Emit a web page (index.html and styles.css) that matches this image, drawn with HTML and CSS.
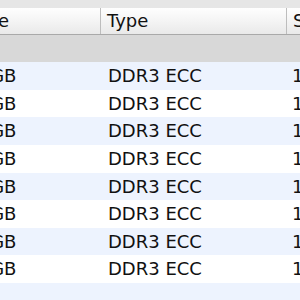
FILE: index.html
```html
<!DOCTYPE html>
<html>
<head>
<meta charset="utf-8">
<link rel="stylesheet" href="styles.css">
</head>
<body>
<div class="table">
  <div class="topstrip"></div>
  <div class="header">
    <div class="hcell c1">Size</div>
    <div class="hcell c2">Type</div>
    <div class="hcell c3">Speed</div>
  </div>
  <div class="band"></div>
  <div class="rows">
    <div class="row"><div class="cell c1">8 GB</div><div class="cell c2">DDR3 ECC</div><div class="cell c3">1333 MHz</div></div>
    <div class="row"><div class="cell c1">8 GB</div><div class="cell c2">DDR3 ECC</div><div class="cell c3">1333 MHz</div></div>
    <div class="row"><div class="cell c1">8 GB</div><div class="cell c2">DDR3 ECC</div><div class="cell c3">1333 MHz</div></div>
    <div class="row"><div class="cell c1">8 GB</div><div class="cell c2">DDR3 ECC</div><div class="cell c3">1333 MHz</div></div>
    <div class="row"><div class="cell c1">8 GB</div><div class="cell c2">DDR3 ECC</div><div class="cell c3">1333 MHz</div></div>
    <div class="row"><div class="cell c1">8 GB</div><div class="cell c2">DDR3 ECC</div><div class="cell c3">1333 MHz</div></div>
    <div class="row"><div class="cell c1">8 GB</div><div class="cell c2">DDR3 ECC</div><div class="cell c3">1333 MHz</div></div>
    <div class="row"><div class="cell c1">8 GB</div><div class="cell c2">DDR3 ECC</div><div class="cell c3">1333 MHz</div></div>
    <div class="row empty"></div>
  </div>
</div>
</body>
</html>
```
FILE: styles.css
```css
html, body {
  margin: 0;
  padding: 0;
  width: 300px;
  height: 300px;
  overflow: hidden;
  background: #ffffff;
}
.table {
  margin-left: -35px;
  width: 420px;
  font-family: "DejaVu Sans", Verdana, sans-serif;
  font-size: 18px;
  color: #111111;
}
.topstrip {
  height: 8px;
  background: #e6e6e6;
}
.header {
  display: flex;
  height: 26px;
  background: linear-gradient(#fefefe, #f4f4f4 50%, #e9e9e9);
  border-bottom: 1px solid #a9a9a9;
}
.hcell {
  box-sizing: border-box;
  padding-left: 6px;
  line-height: 26px;
  white-space: nowrap;
  overflow: hidden;
}
.header .c1, .header .c2 {
  border-right: 1px solid #bdbdbd;
}
.c1 { width: 136px; flex: none; box-sizing: border-box; }
.c2 { width: 186px; flex: none; box-sizing: border-box; }
.c3 { flex: 1; }
.hcell.c1, .cell.c1 { padding-left: 7px; }
.band {
  height: 27px;
  background: #d8d8d8;
}
.row {
  display: flex;
  height: 27.625px;
}
.row:nth-child(odd) {
  background: #edf3fe;
}
.cell {
  box-sizing: border-box;
  padding-left: 6px;
  line-height: 27px;
  white-space: nowrap;
  overflow: hidden;
}
.cell.c1 { padding-left: 8px; }
.cell.c2 { padding-left: 7px; }
.cell.c3 { padding-left: 5px; }
```
